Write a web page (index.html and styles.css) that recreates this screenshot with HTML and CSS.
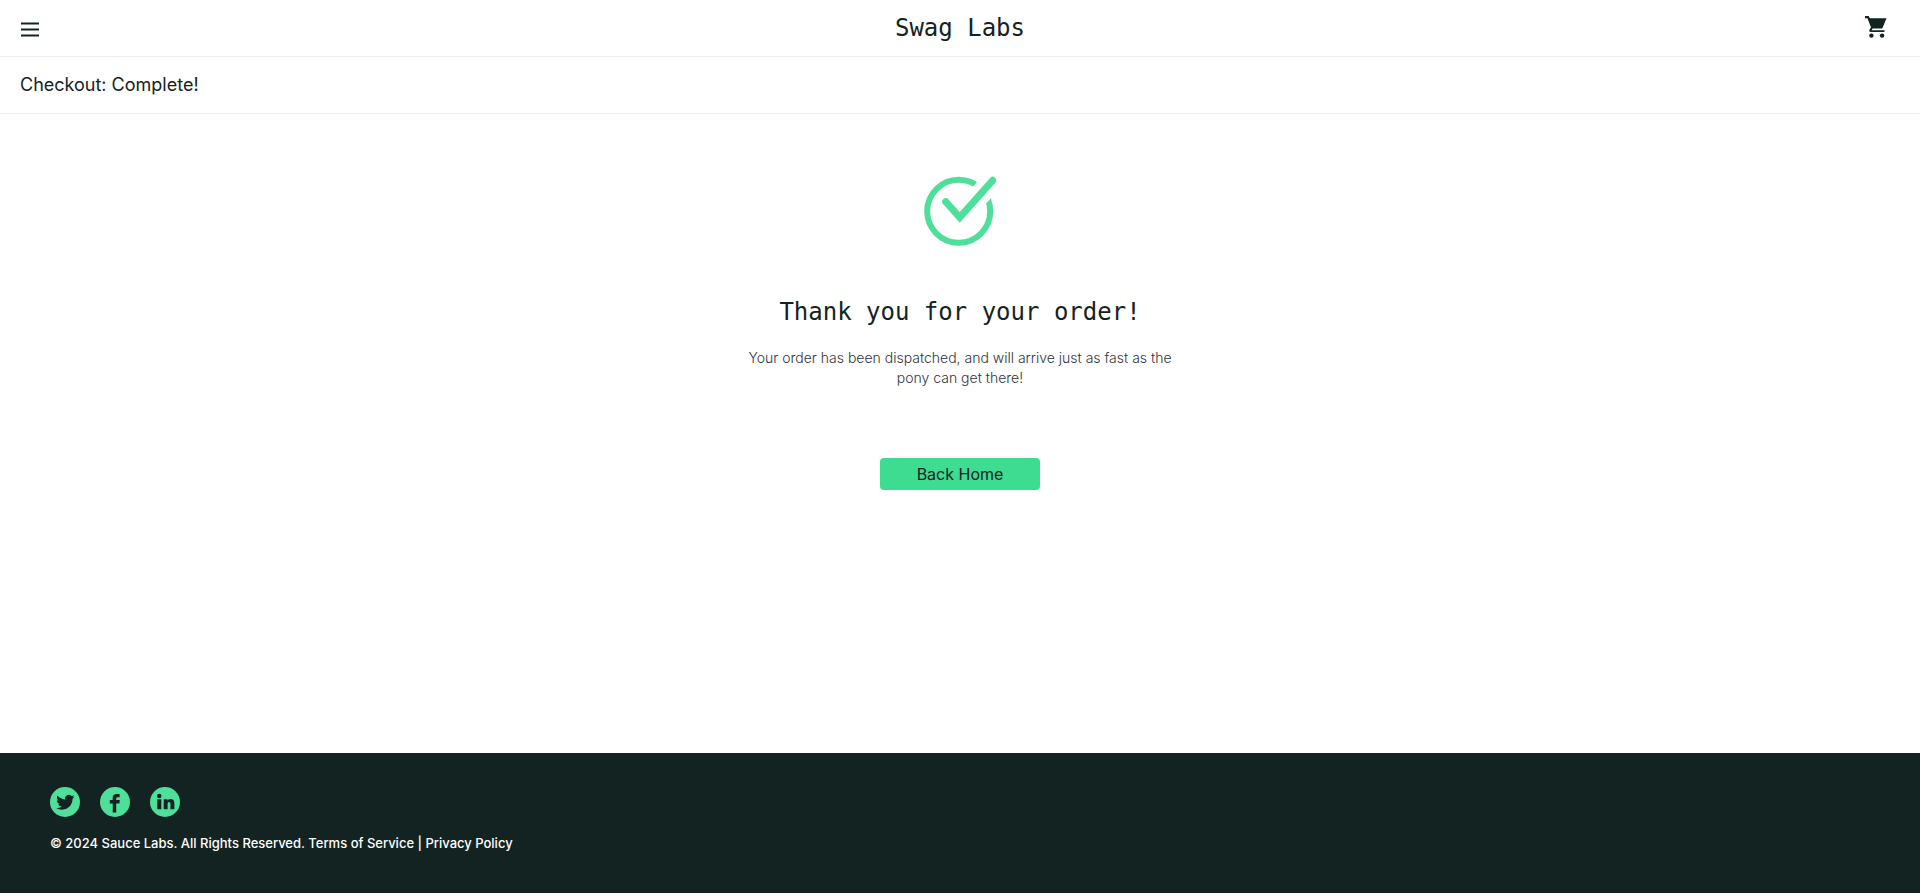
FILE: index.html
```html
<!DOCTYPE html>
<html lang="en">
<head>
<meta charset="utf-8">
<meta name="viewport" content="width=device-width, initial-scale=1">
<title>Swag Labs</title>
<link rel="stylesheet" href="styles.css">
</head>
<body>
<header class="top-bar">
  <button class="icon-button" type="button" aria-label="Open Menu">
    <svg width="18" height="15" viewBox="0 0 18 15"><path d="M0 1.5h18M0 7.5h18M0 13.5h18" stroke="#132322" stroke-width="2.2"/></svg>
  </button>
  <div class="logo">Swag Labs</div>
  <a class="cart" href="#cart" aria-label="Cart">
    <svg width="22" height="22" viewBox="0 0 22 22" fill="#132322"><path d="M0 0h3.7l1.1 2.2H21.5l-3.9 9.5q-.4.9-1.5.9H7.6L6.6 14.2H19.5v1.9H6.2q-2.1 0-2-1.5.1-.8 1.8-3.4L2.4 2.2H0z"/><circle cx="6.4" cy="19.6" r="2.2"/><circle cx="17.1" cy="19.6" r="2.2"/></svg>
  </a>
</header>
<div class="title-bar"><span class="title">Checkout: Complete!</span></div>
<main class="complete">
  <svg class="check" width="74" height="72" viewBox="0 0 74 72" fill="none"><circle cx="35.7" cy="35.3" r="31.5" stroke="#4ee09b" stroke-width="6"/><path d="M36.700 41.400L73 .6" stroke="#fff" stroke-width="21"/><path d="M22.700 25.700L36.700 41.400L69.700 4.300" stroke="#4ee09b" stroke-width="7" stroke-linecap="round"/></svg>
  <h2 class="heading">Thank you for your order!</h2>
  <p class="message">Your order has been dispatched, and will arrive just as fast as the pony can get there!</p>
  <button class="home-button" type="button">Back Home</button>
</main>
<footer class="footer">
  <ul class="social">
    <li><a href="#twitter" aria-label="Twitter"><svg width="30" height="30" viewBox="0 0 30 30"><circle cx="15" cy="15" r="15" fill="#4ee09b"/><path transform="translate(6.200 6.200) scale(.76)" fill="#132322" d="M23.950 4.570a10 10 0 0 1-2.820.770 4.960 4.960 0 0 0 2.160-2.720c-.950.550-2 .950-3.130 1.180a4.920 4.920 0 0 0-8.380 4.480C7.690 8.100 4.070 6.130 1.640 3.160a4.820 4.820 0 0 0-.670 2.480c0 1.710.870 3.210 2.190 4.100a4.900 4.900 0 0 1-2.230-.620v.060a4.920 4.920 0 0 0 3.950 4.830 5 5 0 0 1-2.210.080 4.940 4.940 0 0 0 4.600 3.420A9.870 9.870 0 0 1 0 19.540a13.990 13.990 0 0 0 7.550 2.210c9.050 0 14-7.500 14-13.980 0-.210 0-.420-.020-.630a9.940 9.940 0 0 0 2.420-2.570z"/></svg></a></li>
    <li><a href="#facebook" aria-label="Facebook"><svg width="30" height="30" viewBox="0 0 30 30"><circle cx="15" cy="15" r="15" fill="#4ee09b"/><path fill="#132322" d="M12.700 25.500V16.500H9.800V13h2.900v-2.200C12.700 8 14.500 7 16.900 7h2.700v3.200h-1.800c-1.300 0-1.600.7-1.600 1.600V13h3.600l-.4 3.500h-3.200v9z"/></svg></a></li>
    <li><a href="#linkedin" aria-label="LinkedIn"><svg width="30" height="30" viewBox="0 0 30 30"><circle cx="15" cy="15" r="15" fill="#4ee09b"/><circle cx="9.300" cy="9" r="2.200" fill="#132322"/><path fill="#132322" d="M7.300 12.300h4v10h-4zM13.700 12.300h3.800v1.400c.6-1 1.700-1.700 3.100-1.700 2.900 0 3.800 1.800 3.800 4.700v5.600h-4v-5c0-1.200-.2-2.200-1.300-2.200s-1.500.9-1.500 2.200v5h-3.900z"/></svg></a></li>
  </ul>
  <div class="copyright">© 2024 Sauce Labs. All Rights Reserved. Terms of Service | Privacy Policy</div>
</footer>
</body>
</html>
```
FILE: styles.css
```css
* {
  box-sizing: border-box;
}

body {
  margin: 0;
  min-height: 100vh;
  display: flex;
  flex-direction: column;
  background: #fff;
  color: #132322;
  font-family: "Inter", "Liberation Sans", sans-serif;
}

svg {
  display: block;
}

.top-bar {
  display: grid;
  grid-template-columns: 1fr auto 1fr;
  align-items: center;
  height: 57px;
  padding: 0 20px;
  border-bottom: 1px solid #ededed;
}

.icon-button {
  justify-self: start;
  padding: 2px 1px 0;
  border: 0;
  background: none;
  cursor: pointer;
}

.logo {
  font-family: "DejaVu Sans Mono", monospace;
  font-size: 24px;
  line-height: 32px;
}

.cart {
  justify-self: end;
  padding: 0 13px 2px 0;
}

.title-bar {
  display: flex;
  align-items: center;
  height: 57px;
  padding: 0 20px;
  border-bottom: 1px solid #ededed;
}

.title {
  font-size: 18px;
  line-height: 24px;
}

.complete {
  flex: 1;
  display: flex;
  flex-direction: column;
  align-items: center;
  padding: 62px 20px 40px;
}

.heading {
  margin: 48px 0 0;
  font-family: "DejaVu Sans Mono", monospace;
  font-size: 24px;
  font-weight: 400;
  line-height: 32px;
}

.message {
  max-width: 440px;
  margin: 20px 0 0;
  color: #30343c;
  font-size: 14px;
  font-weight: 300;
  line-height: 20px;
  text-align: center;
}

.home-button {
  width: 160px;
  height: 32px;
  margin-top: 70px;
  border: 0;
  border-radius: 4px;
  background: #3ddc91;
  color: #132322;
  font-family: inherit;
  font-size: 16px;
  cursor: pointer;
}

.footer {
  padding: 34px 50px 40px;
  background: #132322;
  color: #fff;
}

.social {
  display: flex;
  gap: 20px;
  margin: 0 0 16px;
  padding: 0;
  list-style: none;
}

.copyright {
  font-size: 13px;
  font-weight: 500;
  line-height: 20px;
}
```
